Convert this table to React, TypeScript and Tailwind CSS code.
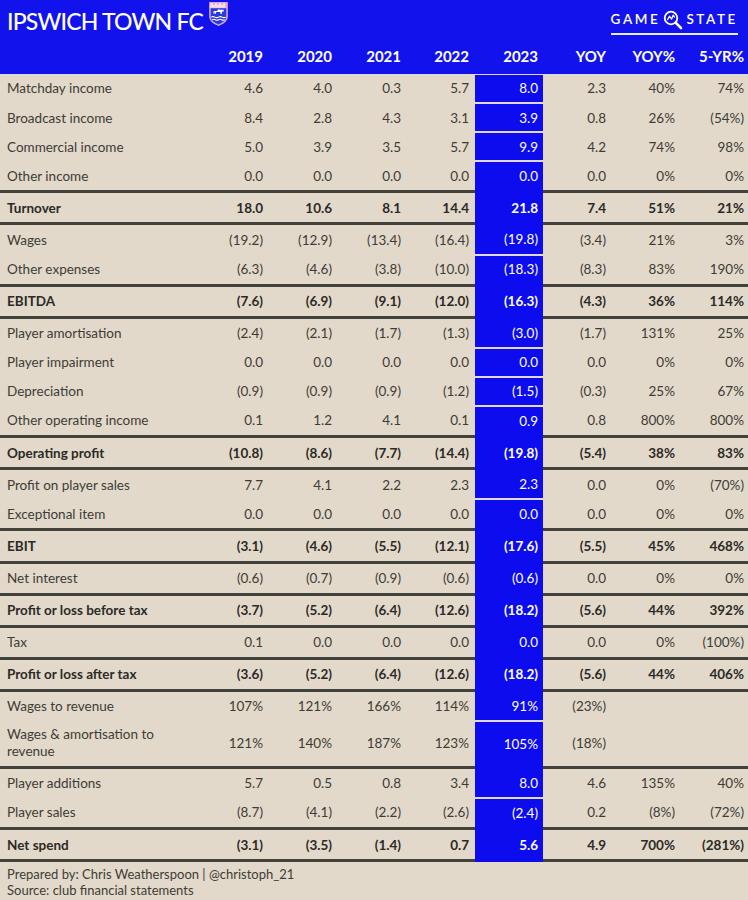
type Row =
	| { kind: "sep" }
	| { kind: "row"; label: string; vals: string[]; bold?: boolean; tall?: boolean };

const COLS = "grid grid-cols-[201px_68px_69px_69px_68px_68px_69px_69px_67px]";

const HEADERS = ["2019", "2020", "2021", "2022", "2023", "YOY", "YOY%", "5-YR%"];

const SEP: Row = { kind: "sep" };

const r = (label: string, vals: string[], bold = false, tall = false): Row => ({
	kind: "row",
	label,
	vals,
	bold,
	tall,
});

const ROWS: Row[] = [
	r("Matchday income", ["4.6", "4.0", "0.3", "5.7", "8.0", "2.3", "40%", "74%"]),
	r("Broadcast income", ["8.4", "2.8", "4.3", "3.1", "3.9", "0.8", "26%", "(54%)"]),
	r("Commercial income", ["5.0", "3.9", "3.5", "5.7", "9.9", "4.2", "74%", "98%"]),
	r("Other income", ["0.0", "0.0", "0.0", "0.0", "0.0", "0.0", "0%", "0%"]),
	SEP,
	r("Turnover", ["18.0", "10.6", "8.1", "14.4", "21.8", "7.4", "51%", "21%"], true),
	SEP,
	r("Wages", ["(19.2)", "(12.9)", "(13.4)", "(16.4)", "(19.8)", "(3.4)", "21%", "3%"]),
	r("Other expenses", ["(6.3)", "(4.6)", "(3.8)", "(10.0)", "(18.3)", "(8.3)", "83%", "190%"]),
	SEP,
	r("EBITDA", ["(7.6)", "(6.9)", "(9.1)", "(12.0)", "(16.3)", "(4.3)", "36%", "114%"], true),
	SEP,
	r("Player amortisation", ["(2.4)", "(2.1)", "(1.7)", "(1.3)", "(3.0)", "(1.7)", "131%", "25%"]),
	r("Player impairment", ["0.0", "0.0", "0.0", "0.0", "0.0", "0.0", "0%", "0%"]),
	r("Depreciation", ["(0.9)", "(0.9)", "(0.9)", "(1.2)", "(1.5)", "(0.3)", "25%", "67%"]),
	r("Other operating income", ["0.1", "1.2", "4.1", "0.1", "0.9", "0.8", "800%", "800%"]),
	SEP,
	r("Operating profit", ["(10.8)", "(8.6)", "(7.7)", "(14.4)", "(19.8)", "(5.4)", "38%", "83%"], true),
	SEP,
	r("Profit on player sales", ["7.7", "4.1", "2.2", "2.3", "2.3", "0.0", "0%", "(70%)"]),
	r("Exceptional item", ["0.0", "0.0", "0.0", "0.0", "0.0", "0.0", "0%", "0%"]),
	SEP,
	r("EBIT", ["(3.1)", "(4.6)", "(5.5)", "(12.1)", "(17.6)", "(5.5)", "45%", "468%"], true),
	SEP,
	r("Net interest", ["(0.6)", "(0.7)", "(0.9)", "(0.6)", "(0.6)", "0.0", "0%", "0%"]),
	SEP,
	r("Profit or loss before tax", ["(3.7)", "(5.2)", "(6.4)", "(12.6)", "(18.2)", "(5.6)", "44%", "392%"], true),
	SEP,
	r("Tax", ["0.1", "0.0", "0.0", "0.0", "0.0", "0.0", "0%", "(100%)"]),
	SEP,
	r("Profit or loss after tax", ["(3.6)", "(5.2)", "(6.4)", "(12.6)", "(18.2)", "(5.6)", "44%", "406%"], true),
	SEP,
	r("Wages to revenue", ["107%", "121%", "166%", "114%", "91%", "(23%)", "", ""]),
	r("Wages & amortisation to revenue", ["121%", "140%", "187%", "123%", "105%", "(18%)", "", ""], false, true),
	SEP,
	r("Player additions", ["5.7", "0.5", "0.8", "3.4", "8.0", "4.6", "135%", "40%"]),
	r("Player sales", ["(8.7)", "(4.1)", "(2.2)", "(2.6)", "(2.4)", "0.2", "(8%)", "(72%)"]),
	SEP,
	r("Net spend", ["(3.1)", "(3.5)", "(1.4)", "0.7", "5.6", "4.9", "700%", "(281%)"], true),
	SEP,
];

function Crest() {
	return (
		<svg width="21" height="26" viewBox="0 0 20 25" className="ml-[5px] mt-[-8px]">
			<path d="M1 1 H19 V15 Q19 21 10 24 Q1 21 1 15 Z" fill="#d9a6d6" />
			<path d="M2.5 2 h2 v1.5 h2 V2 h2 v1.5 h2 V2 h2 v1.5 h2 V2 h2 v4.5 h-15 Z" fill="#f3dcef" />
			<path d="M2.5 7 H17.5 V15 Q17.5 20 10 22.5 Q2.5 20 2.5 15 Z" fill="#2b3bd8" />
			<path d="M4.5 12.5 l1 -3 h3 l1.5 -1.5 l2 0.5 h3 v1.5 h-1.5 l-0.5 2.5 h-1 l-0.2 -2 h-4 l-0.6 2 h-1 l0.2 -2 Z" fill="#ffffff" />
			<path d="M3 15.5 q1.75 -1 3.5 0 t3.5 0 t3.5 0 t3.5 0" stroke="#ffffff" strokeWidth="1" fill="none" />
			<path d="M4 18 q1.5 -1 3 0 t3 0 t3 0 t3 0" stroke="#ffffff" strokeWidth="1" fill="none" />
		</svg>
	);
}

function GameStateLogo() {
	return (
		<div className="flex flex-col items-stretch">
			<div className="flex items-center text-[13.5px] font-semibold tracking-[2.6px] text-white">
				<span>GAME</span>
				<svg width="20" height="20" viewBox="0 0 20 20" className="mx-[3px] mt-[1px]">
					<circle cx="8" cy="8" r="6.3" stroke="#ffffff" strokeWidth="1.8" fill="none" />
					<path d="M4.3 10 L6.5 6.3 L8.6 9 L10.2 5.2 L11.8 7.5" stroke="#ffffff" strokeWidth="1.3" fill="none" strokeLinejoin="round" />
					<path d="M12.6 12.6 L18 18" stroke="#ffffff" strokeWidth="2.6" strokeLinecap="round" />
				</svg>
				<span>STATE</span>
			</div>
			<div className="mt-[3px] h-[2px] bg-[#e8e8ff]" />
		</div>
	);
}

function DataRow({ row, prevSep, nextSep }: { row: Extract<Row, { kind: "row" }>; prevSep: boolean; nextSep: boolean }) {
	const weight = row.bold ? "font-bold text-[#2c2a25]" : "text-[#3e3c35]";
	return (
		<div className={`${COLS} ${row.tall ? "h-[45px]" : "h-[29.1px]"} ${weight}`}>
			<div className={`flex items-center pl-[7px] ${row.tall ? "pr-[40px] leading-[17px]" : ""}`}>
				{row.label}
			</div>
			{row.vals.map((v, i) =>
				i === 4 ? (
					<div key={i} className={`flex ${prevSep ? "" : "pt-[1px]"} ${nextSep ? "" : "pb-[1px]"}`}>
						<div className="flex flex-1 items-center justify-end bg-[#0c0cee] pr-[5px] text-white">{v}</div>
					</div>
				) : (
					<div key={i} className={`flex items-center justify-end ${i === 7 ? "pr-[4px]" : "pr-[6px]"}`}>
						{v}
					</div>
				),
			)}
		</div>
	);
}

export default function App() {
	return (
		<div className="h-[900px] w-[748px] overflow-hidden bg-[#e2d9cb] font-['Lato',sans-serif] text-[13.5px]">
			<header className="flex h-[74px] flex-col bg-[#1212ec]">
				<div className="flex h-[40px] items-start justify-between pl-[7px] pr-[10px] pt-[9px]">
					<div className="flex items-start">
						<span className="text-[23px] font-medium leading-[24px] tracking-[-0.8px] text-white">IPSWICH TOWN FC</span>
						<Crest />
					</div>
					<GameStateLogo />
				</div>
				<div className={`${COLS} flex-1 items-center pb-[2px] text-[15px] font-bold text-white`}>
					<div />
					{HEADERS.map((h, i) => (
						<div key={h} className={`text-right ${i === 7 ? "pr-[4px]" : i === 4 ? "pr-[5px]" : "pr-[6px]"}`}>
							{h}
						</div>
					))}
				</div>
			</header>

			{ROWS.map((row, idx) => {
				if (row.kind === "sep") {
					return (
						<div key={idx} className={`${COLS} h-[3px]`}>
							<div className="col-span-5 bg-[#43423a]" />
							<div className="bg-[#0c0cee]" />
							<div className="col-span-3 bg-[#43423a]" />
						</div>
					);
				}
				const prev = ROWS[idx - 1];
				const next = ROWS[idx + 1];
				return (
					<DataRow
						key={idx}
						row={row}
						prevSep={prev?.kind === "sep"}
						nextSep={next?.kind === "sep"}
					/>
				);
			})}

			<footer className="px-[7px] pt-[4px] text-[13px] leading-[16px] text-[#3e3c35]">
				<p>Prepared by: Chris Weatherspoon | @christoph_21</p>
				<p>Source: club financial statements</p>
			</footer>
		</div>
	);
}
